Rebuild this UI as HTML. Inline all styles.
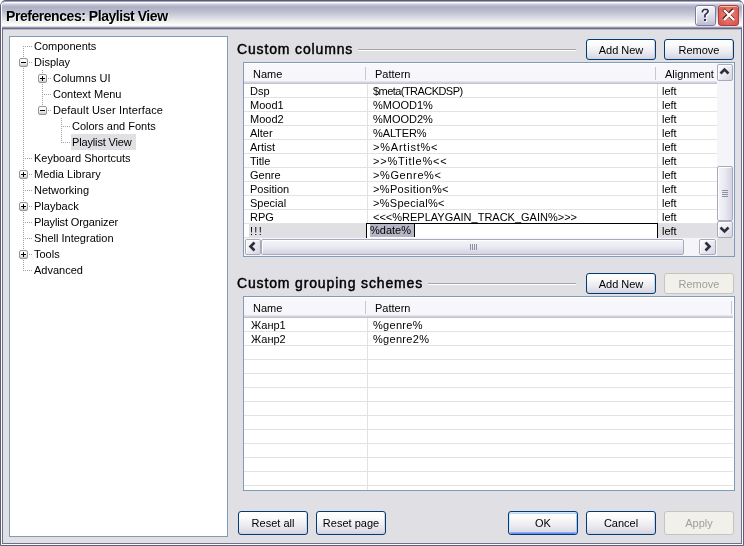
<!DOCTYPE html>
<html><head><meta charset="utf-8">
<style>
*{margin:0;padding:0;box-sizing:border-box}
html,body{width:744px;height:546px;overflow:hidden;background:#fff}
body{position:relative;font:11px/13px "Liberation Sans",sans-serif;color:#000}
#win{will-change:transform}
.a{position:absolute}
.t{position:absolute;white-space:nowrap;font:11px/13px "Liberation Sans",sans-serif}
#win{position:absolute;left:0;top:0;width:744px;height:546px;background:#E0DFE3;border-radius:6px 6px 0 0;overflow:hidden}
#title{position:absolute;left:0;top:0;width:744px;height:30px;background:linear-gradient(to bottom,#5d5d7a 0px,#5d5d7a 1px,#a0a0b8 1px,#a0a0b8 2px,#ffffff 2px,#ffffff 3px,#e2e2ea 3px,#e2e2ea 4px,#cacad9 4px,#cacad9 5px,#bdbdd0 5px,#bdbdd0 6px,#b2b2c9 6px,#b2b2c9 7px,#b0b0c8 7px,#b0b0c8 8px,#b2b3c9 8px,#b2b3c9 9px,#b5b7cb 9px,#b5b7cb 10px,#b9bbcd 10px,#b9bbcd 11px,#bdbfd0 11px,#bdbfd0 12px,#c1c3d3 12px,#c1c3d3 13px,#c5c7d6 13px,#c5c7d6 14px,#cacbd9 14px,#cacbd9 15px,#cfd0dc 15px,#cfd0dc 16px,#d4d5df 16px,#d4d5df 17px,#d9dae3 17px,#d9dae3 18px,#dedfe6 18px,#dedfe6 19px,#e3e4ea 19px,#e3e4ea 20px,#e8e9ed 20px,#e8e9ed 21px,#edeef1 21px,#edeef1 22px,#f2f2f3 22px,#f2f2f3 23px,#f7f7f5 23px,#f7f7f5 24px,#fbfbf8 24px,#fbfbf8 25px,#fbfbf8 25px,#fbfbf8 26px,#d8d8e0 26px,#d8d8e0 27px,#9898b0 27px,#9898b0 28px,#6a6a88 28px,#6a6a88 29px,#b8b8c8 29px,#b8b8c8 30px)}
#ttl{position:absolute;left:6px;top:8px;letter-spacing:-0.45px;font:bold 14px/16px "Liberation Sans",sans-serif;color:#000;text-shadow:1px 1px 0 rgba(255,255,255,.6)}
.fl{position:absolute;top:0;bottom:0;width:1px}
.btn{position:absolute;border:1px solid #003C74;border-radius:3px;
background:linear-gradient(to bottom,#fff 0,#fbfbfc 25%,#ececf1 60%,#dcdbe5 90%,#cfcedb 100%);
box-shadow:inset -1px -1px 0 #d3d2de;text-align:center;font:11px "Liberation Sans",sans-serif;color:#000;white-space:nowrap}
.btn.dis{border-color:#c6c5bd;background:#f1f0eb;box-shadow:none;color:#a09f96}
.btn.def{box-shadow:inset 0 1px 0 #cee7ff,inset 0 2px 0 #bcd4f6,inset 1px 0 0 #cee7ff,inset -1px 0 0 #aac6f4,inset 0 -1px 0 #6a88ee,inset 0 -2px 0 #8ab0f0}
.box{position:absolute;border:1px solid #7F9DB9;background:#fff}
.dotv{position:absolute;width:1px;background:repeating-linear-gradient(to bottom,#a0a0a0 0,#a0a0a0 1px,transparent 1px,transparent 2px)}
.doth{position:absolute;height:1px;background:repeating-linear-gradient(to right,#a0a0a0 0,#a0a0a0 1px,transparent 1px,transparent 2px)}
.pm{position:absolute;width:9px;height:9px;border:1px solid #94949f;border-radius:2px;background:linear-gradient(to bottom,#fff 0,#f6f6f8 45%,#dcdce2 80%,#c6c6d0 100%)}
.pm:before{content:"";position:absolute;left:1px;top:3px;width:5px;height:1px;background:#000}
.pm.p:after{content:"";position:absolute;left:3px;top:1px;width:1px;height:5px;background:#000}
.hdr{position:absolute;background:linear-gradient(to bottom,#fff 0,#fff 1px,#f8f8fc 1px,#f7f7fb 100%)}
.hsh{position:absolute;height:3px;background:linear-gradient(to bottom,#e3e3eb 0,#e3e3eb 1px,#d4d4df 1px,#d4d4df 2px,#c3c3cf 2px,#c3c3cf 3px)}
.hsep{position:absolute;width:1px;background:#c7c6d3}
.gh{position:absolute;height:1px;background:#e2e2e2}
.gv{position:absolute;width:1px;background:#e2e2e2}
.sbtn{position:absolute;border:1px solid #a9a9bd;border-radius:2px;background:linear-gradient(to bottom right,#fdfdfe 0,#ececf2 45%,#d5d5e2 100%);box-shadow:inset 1px 1px 0 #fff}
.thv{background:linear-gradient(to right,#f4f4f9 0,#e9e9f1 50%,#d2d2e1 100%)}
.thh{background:linear-gradient(to bottom,#f4f4f9 0,#e9e9f1 50%,#d2d2e1 100%)}
.etch{position:absolute;height:2px;border-top:1px solid #a5a5a5;border-bottom:1px solid #fff}
.h2{position:absolute;white-space:nowrap;font:14px/16px "Liberation Sans",sans-serif;color:#000;letter-spacing:0.85px;-webkit-text-stroke:0.45px #000}
</style></head><body>
<div id="win">
  <div id="title"></div>
  <div id="ttl">Preferences: Playlist View</div>
  <!-- help & close -->
  <div class="a" style="left:695px;top:5px;width:21px;height:21px;border:1px solid #7c7c9e;border-radius:3px;background:linear-gradient(to bottom,#f4f4f8 0,#e8e8f0 30%,#d4d4e2 70%,#bcbcd0 100%);box-shadow:inset 1px 1px 0 #fff"></div>
  <svg class="a" style="left:695px;top:5px" width="21" height="21" viewBox="0 0 21 21">
    <path d="M8.5 8.5 V7 L10 5 H13 L14 6.5 V8 L11 11 V13.5" fill="none" stroke="#fff" stroke-width="1.7"/>
    <rect x="10" y="15" width="2" height="2" fill="#fff"/>
    <path d="M7.5 7.5 V6 L9 4.5 H12 L13 5.5 V7 L10 10 V12.5" fill="none" stroke="#2c2c58" stroke-width="1.7"/>
    <rect x="9" y="14" width="2" height="2" fill="#2c2c58"/>
  </svg>
  <div class="a" style="left:718px;top:5px;width:21px;height:21px;border:1px solid #b03c3c;border-radius:3px;background:radial-gradient(ellipse at 50% 45%,#f08a80 0,#e46a62 50%,#d24c4c 100%);box-shadow:inset 0 1px 0 #f3c69a"></div>
  <svg class="a" style="left:718px;top:5px" width="21" height="21" viewBox="0 0 21 21">
    <path d="M5.5 4.5 L15.5 14.5 M15.5 4.5 L5.5 14.5" stroke="#5a1010" stroke-width="3.4"/>
    <path d="M6 5 L16 15 M16 5 L6 15" stroke="#fff" stroke-width="2.4"/>
  </svg>
  <!-- frame -->
  <div class="a" style="left:0;top:0;width:744px;height:546px;border:1px solid #5d5d7a;border-radius:6px 6px 0 0"></div>
  <div class="a" style="left:1px;top:1px;width:742px;height:544px;border:1px solid #fafafd;border-top-color:#a0a0b8;border-radius:5px 5px 0 0"></div>
  <div class="a" style="left:2px;top:29px;width:740px;height:515px;border:1px solid #707088;border-top:0"></div>
  <!-- tree -->
  <div class="box" style="left:9px;top:36px;width:219px;height:501px"></div>
  <div class="dotv" style="left:23px;top:46px;height:225px"></div>
  <div class="doth" style="left:25px;top:46px;width:7px"></div>
  <div class="doth" style="left:25px;top:62px;width:7px"></div>
  <div class="dotv" style="left:42px;top:70px;height:41px"></div>
  <div class="doth" style="left:44px;top:78px;width:7px"></div>
  <div class="doth" style="left:44px;top:94px;width:7px"></div>
  <div class="doth" style="left:44px;top:110px;width:7px"></div>
  <div class="dotv" style="left:61px;top:118px;height:25px"></div>
  <div class="doth" style="left:63px;top:126px;width:7px"></div>
  <div class="doth" style="left:63px;top:142px;width:7px"></div>
  <div class="doth" style="left:25px;top:158px;width:7px"></div>
  <div class="doth" style="left:25px;top:174px;width:7px"></div>
  <div class="doth" style="left:25px;top:190px;width:7px"></div>
  <div class="doth" style="left:25px;top:206px;width:7px"></div>
  <div class="doth" style="left:25px;top:222px;width:7px"></div>
  <div class="doth" style="left:25px;top:238px;width:7px"></div>
  <div class="doth" style="left:25px;top:254px;width:7px"></div>
  <div class="doth" style="left:25px;top:270px;width:7px"></div>
  <div class="pm" style="left:19px;top:58px"></div>
  <div class="pm p" style="left:38px;top:74px"></div>
  <div class="pm" style="left:38px;top:106px"></div>
  <div class="pm p" style="left:19px;top:170px"></div>
  <div class="pm p" style="left:19px;top:202px"></div>
  <div class="pm p" style="left:19px;top:250px"></div>
  <div class="a" style="left:71px;top:134px;width:65px;height:16px;background:#e0dfe3"></div>
  <div class="t" style="left:34px;top:40px">Components</div>
  <div class="t" style="left:34px;top:56px">Display</div>
  <div class="t" style="left:53px;top:72px">Columns UI</div>
  <div class="t" style="left:53px;top:88px">Context Menu</div>
  <div class="t" style="left:53px;top:104px;letter-spacing:0.14px">Default User Interface</div>
  <div class="t" style="left:72px;top:120px">Colors and Fonts</div>
  <div class="t" style="left:72px;top:136px;letter-spacing:-0.15px">Playlist View</div>
  <div class="t" style="left:34px;top:152px">Keyboard Shortcuts</div>
  <div class="t" style="left:34px;top:168px">Media Library</div>
  <div class="t" style="left:34px;top:184px">Networking</div>
  <div class="t" style="left:34px;top:200px">Playback</div>
  <div class="t" style="left:34px;top:216px;letter-spacing:-0.12px">Playlist Organizer</div>
  <div class="t" style="left:34px;top:232px">Shell Integration</div>
  <div class="t" style="left:34px;top:248px">Tools</div>
  <div class="t" style="left:34px;top:264px">Advanced</div>

  <!-- custom columns -->
  <div class="h2" style="left:237px;top:41px">Custom columns</div>
  <div class="etch" style="left:358px;top:49px;width:218px"></div>
  <div class="btn" style="left:586px;top:39px;width:70px;height:21px;line-height:21px">Add New</div>
  <div class="btn" style="left:664px;top:39px;width:70px;height:21px;line-height:21px">Remove</div>

  <div class="box" style="left:243px;top:62px;width:492px;height:195px"></div>
  <div class="hdr" style="left:244px;top:63px;width:473px;height:18px"></div>
  <div class="hsh" style="left:244px;top:81px;width:473px"></div>
  <div class="hsep" style="left:365px;top:67px;height:13px"></div>
  <div class="hsep" style="left:655px;top:67px;height:13px"></div>
  <div class="t" style="left:253px;top:68px">Name</div>
  <div class="t" style="left:375px;top:68px">Pattern</div>
  <div class="t" style="left:665px;top:68px">Alignment</div>
<!--R1-->
<div class="a" style="left:249px;top:224px;width:468px;height:14px;background:#e0dfe3"></div>
<div class="gh" style="left:244px;top:97px;width:473px"></div>
<div class="gh" style="left:244px;top:111px;width:473px"></div>
<div class="gh" style="left:244px;top:125px;width:473px"></div>
<div class="gh" style="left:244px;top:139px;width:473px"></div>
<div class="gh" style="left:244px;top:153px;width:473px"></div>
<div class="gh" style="left:244px;top:167px;width:473px"></div>
<div class="gh" style="left:244px;top:181px;width:473px"></div>
<div class="gh" style="left:244px;top:195px;width:473px"></div>
<div class="gh" style="left:244px;top:209px;width:473px"></div>
<div class="gh" style="left:244px;top:223px;width:473px"></div>
<div class="gh" style="left:244px;top:237px;width:473px"></div>
<div class="gv" style="left:367px;top:84px;height:154px"></div>
<div class="gv" style="left:657px;top:84px;height:154px"></div>
<div class="t" style="left:250px;top:85px">Dsp</div>
<div class="t" style="left:373px;top:85px;letter-spacing:-0.55px">$meta(TRACKDSP)</div>
<div class="t" style="left:662px;top:85px">left</div>
<div class="t" style="left:250px;top:99px">Mood1</div>
<div class="t" style="left:373px;top:99px;letter-spacing:0px">%MOOD1%</div>
<div class="t" style="left:662px;top:99px">left</div>
<div class="t" style="left:250px;top:113px">Mood2</div>
<div class="t" style="left:373px;top:113px;letter-spacing:0px">%MOOD2%</div>
<div class="t" style="left:662px;top:113px">left</div>
<div class="t" style="left:250px;top:127px">Alter</div>
<div class="t" style="left:373px;top:127px;letter-spacing:-0.1px">%ALTER%</div>
<div class="t" style="left:662px;top:127px">left</div>
<div class="t" style="left:250px;top:141px">Artist</div>
<div class="t" style="left:373px;top:141px;letter-spacing:0.78px">&gt;%Artist%&lt;</div>
<div class="t" style="left:662px;top:141px">left</div>
<div class="t" style="left:250px;top:155px">Title</div>
<div class="t" style="left:373px;top:155px;letter-spacing:0.8px">&gt;&gt;%Title%&lt;&lt;</div>
<div class="t" style="left:662px;top:155px">left</div>
<div class="t" style="left:250px;top:169px">Genre</div>
<div class="t" style="left:373px;top:169px;letter-spacing:0.62px">&gt;%Genre%&lt;</div>
<div class="t" style="left:662px;top:169px">left</div>
<div class="t" style="left:250px;top:183px">Position</div>
<div class="t" style="left:373px;top:183px;letter-spacing:0.36px">&gt;%Position%&lt;</div>
<div class="t" style="left:662px;top:183px">left</div>
<div class="t" style="left:250px;top:197px">Special</div>
<div class="t" style="left:373px;top:197px;letter-spacing:0.3px">&gt;%Special%&lt;</div>
<div class="t" style="left:662px;top:197px">left</div>
<div class="t" style="left:250px;top:211px">RPG</div>
<div class="t" style="left:373px;top:211px;letter-spacing:0px">&lt;&lt;&lt;%REPLAYGAIN_TRACK_GAIN%&gt;&gt;&gt;</div>
<div class="t" style="left:662px;top:211px">left</div>
<div class="t" style="left:250px;top:225px;letter-spacing:1.3px">!!!</div>
<div class="t" style="left:662px;top:225px">left</div>
<div class="a" style="left:366px;top:223px;width:292px;height:15px;border:1px solid #000;border-bottom:0;background:#fff"></div>
<div class="a" style="left:370px;top:224px;width:44px;height:13px;background:#b5b5c5"></div>
<div class="t" style="left:370px;top:224px">%date%</div>
<div class="a" style="left:414px;top:224px;width:1px;height:13px;background:#000"></div>
<div class="a" style="left:717px;top:63px;width:17px;height:175px;background:#f5f5f9"></div>
<div class="sbtn" style="left:717px;top:64px;width:16px;height:17px"></div>
<svg class="a" style="left:717px;top:64px" width="16" height="17"><path d="M3.5 9.5 L7.5 5.5 L11.5 9.5" fill="none" stroke="#2e2e3e" stroke-width="2.6"/></svg>
<div class="sbtn thv" style="left:717px;top:166px;width:16px;height:55px"></div>
<div class="a" style="left:722px;top:190px;width:6px;height:1px;background:#8e8ea4"></div>
<div class="a" style="left:722px;top:192px;width:6px;height:1px;background:#8e8ea4"></div>
<div class="a" style="left:722px;top:194px;width:6px;height:1px;background:#8e8ea4"></div>
<div class="a" style="left:722px;top:196px;width:6px;height:1px;background:#8e8ea4"></div>
<div class="sbtn" style="left:717px;top:221px;width:16px;height:17px"></div>
<svg class="a" style="left:717px;top:221px" width="16" height="17"><path d="M3.5 6.5 L7.5 10.5 L11.5 6.5" fill="none" stroke="#2e2e3e" stroke-width="2.6"/></svg>
<div class="a" style="left:244px;top:238px;width:473px;height:18px;background:#f5f5f9"></div>
<div class="sbtn" style="left:245px;top:239px;width:16px;height:16px"></div>
<svg class="a" style="left:245px;top:239px" width="16" height="16"><path d="M9.5 3.5 L5.5 7.5 L9.5 11.5" fill="none" stroke="#2e2e3e" stroke-width="2.6"/></svg>
<div class="sbtn thh" style="left:261px;top:239px;width:423px;height:16px"></div>
<div class="a" style="left:470px;top:244px;width:1px;height:6px;background:#8e8ea4"></div>
<div class="a" style="left:472px;top:244px;width:1px;height:6px;background:#8e8ea4"></div>
<div class="a" style="left:474px;top:244px;width:1px;height:6px;background:#8e8ea4"></div>
<div class="a" style="left:476px;top:244px;width:1px;height:6px;background:#8e8ea4"></div>
<div class="sbtn" style="left:699px;top:239px;width:17px;height:16px"></div>
<svg class="a" style="left:699px;top:239px" width="17" height="16"><path d="M6.5 3.5 L10.5 7.5 L6.5 11.5" fill="none" stroke="#2e2e3e" stroke-width="2.6"/></svg>
<div class="a" style="left:717px;top:238px;width:17px;height:18px;background:#e0dfe3"></div>
<!--/R1-->

  <!-- grouping -->
  <div class="h2" style="left:237px;top:275px">Custom grouping schemes</div>
  <div class="etch" style="left:428px;top:283px;width:148px"></div>
  <div class="btn" style="left:586px;top:273px;width:70px;height:21px;line-height:21px">Add New</div>
  <div class="btn dis" style="left:664px;top:273px;width:70px;height:21px;line-height:21px">Remove</div>

  <div class="box" style="left:243px;top:296px;width:492px;height:195px"></div>
  <div class="hdr" style="left:244px;top:297px;width:489px;height:18px"></div>
  <div class="hsh" style="left:244px;top:315px;width:489px"></div>
  <div class="hsep" style="left:365px;top:301px;height:13px"></div>
  <div class="hsep" style="left:731px;top:301px;height:13px"></div>
  <div class="t" style="left:253px;top:302px">Name</div>
  <div class="t" style="left:375px;top:302px">Pattern</div>
<!--R2-->
<div class="gh" style="left:244px;top:331px;width:489px"></div>
<div class="gh" style="left:244px;top:345px;width:489px"></div>
<div class="gh" style="left:244px;top:359px;width:489px"></div>
<div class="gh" style="left:244px;top:373px;width:489px"></div>
<div class="gh" style="left:244px;top:387px;width:489px"></div>
<div class="gh" style="left:244px;top:401px;width:489px"></div>
<div class="gh" style="left:244px;top:415px;width:489px"></div>
<div class="gh" style="left:244px;top:429px;width:489px"></div>
<div class="gh" style="left:244px;top:443px;width:489px"></div>
<div class="gh" style="left:244px;top:457px;width:489px"></div>
<div class="gh" style="left:244px;top:471px;width:489px"></div>
<div class="gh" style="left:244px;top:485px;width:489px"></div>
<div class="gv" style="left:367px;top:318px;height:172px"></div>
<div class="t" style="left:251px;top:319px">Жанр1</div>
<div class="t" style="left:373px;top:319px;letter-spacing:0.3px">%genre%</div>
<div class="t" style="left:251px;top:333px">Жанр2</div>
<div class="t" style="left:373px;top:333px;letter-spacing:0.3px">%genre2%</div>
<!--/R2-->

  <!-- bottom buttons -->
  <div class="btn" style="left:238px;top:511px;width:70px;height:24px;line-height:23px">Reset all</div>
  <div class="btn" style="left:316px;top:511px;width:70px;height:24px;line-height:23px">Reset page</div>
  <div class="btn def" style="left:508px;top:511px;width:70px;height:24px;line-height:23px">OK</div>
  <div class="btn" style="left:586px;top:511px;width:70px;height:24px;line-height:23px">Cancel</div>
  <div class="btn dis" style="left:664px;top:511px;width:70px;height:24px;line-height:23px">Apply</div>
</div>
</body></html>
